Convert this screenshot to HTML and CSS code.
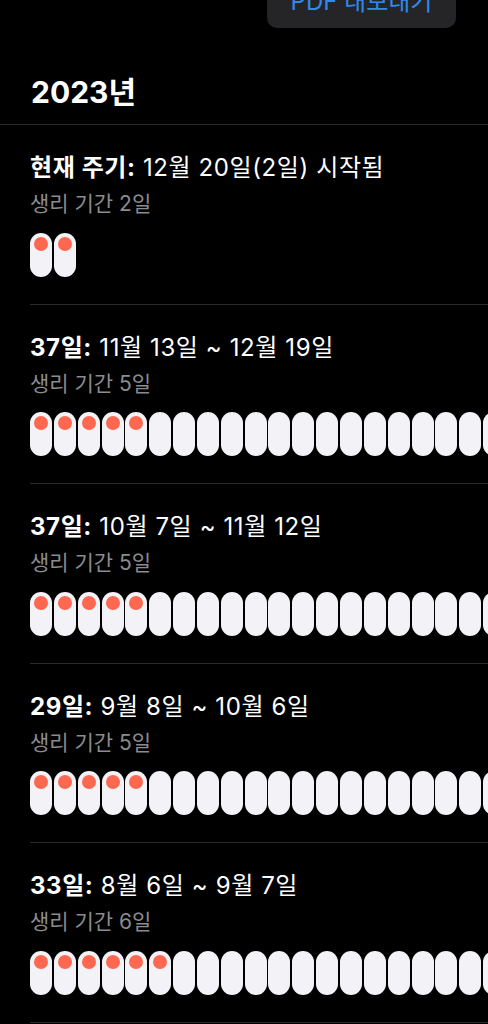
FILE: index.html
```html
<!DOCTYPE html>
<html>
<head>
    <meta charset="utf-8">
    <title>주기 기록</title>
    <link rel="stylesheet" href="styles.css">
</head>
<body>
    <!-- top bar: export button is scrolled half out of view -->
    <div class="topbar">
        <a class="export" href="#">PDF 내보내기</a>
    </div>

    <div class="year">2023년</div>

    <!-- one block per cycle -->
    <div class="cycle">
        <p class="cycle-title"><b>현재 주기:</b> 12월 20일(2일) 시작됨</p>
        <p class="cycle-sub">생리 기간 2일</p>
        <div class="days" data-days="2" data-period="2"></div>
    </div>

    <div class="cycle">
        <p class="cycle-title"><b>37일:</b> 11월 13일 ~ 12월 19일</p>
        <p class="cycle-sub">생리 기간 5일</p>
        <div class="days" data-days="37" data-period="5"></div>
    </div>

    <div class="cycle">
        <p class="cycle-title"><b>37일:</b> 10월 7일 ~ 11월 12일</p>
        <p class="cycle-sub">생리 기간 5일</p>
        <div class="days" data-days="37" data-period="5"></div>
    </div>

    <div class="cycle">
        <p class="cycle-title"><b>29일:</b> 9월 8일 ~ 10월 6일</p>
        <p class="cycle-sub">생리 기간 5일</p>
        <div class="days" data-days="29" data-period="5"></div>
    </div>

    <div class="cycle">
        <p class="cycle-title"><b>33일:</b> 8월 6일 ~ 9월 7일</p>
        <p class="cycle-sub">생리 기간 6일</p>
        <div class="days" data-days="33" data-period="6"></div>
    </div>

    <script>
    // fill each row with one pill per day, a red dot on period days
    var rows = document.querySelectorAll('.days');
    for (var i = 0; i < rows.length; i++) {
        var total = parseInt(rows[i].getAttribute('data-days'));
        var period = parseInt(rows[i].getAttribute('data-period'));
        for (var d = 0; d < total; d++) {
            var pill = document.createElement('div');
            pill.className = 'day';
            if (d < period) {
                var dot = document.createElement('div');
                dot.className = 'dot';
                pill.appendChild(dot);
            }
            rows[i].appendChild(pill);
        }
    }
    </script>
</body>
</html>
```

FILE: styles.css
```css
/* whole page: black, iOS-like type */
body {
    margin: 0;
    padding: 0;
    background: #000;
    color: #fff;
    font-family: Inter, "Noto Sans CJK KR", sans-serif;
    overflow-x: hidden;
}

p { margin: 0; }

/* top bar, only the lower part of the button shows */
.topbar {
    height: 28px;
    overflow: hidden;
    display: flex;
    justify-content: flex-end;
    align-items: flex-end;
    padding-right: 32px;
}

.export {
    display: block;
    width: 189px;
    height: 52px;
    line-height: 52px;
    text-align: center;
    background: #252527;
    border-radius: 10px;
    color: #3289ec;
    font-size: 24px;
    text-decoration: none;
}

/* year heading with a full-width rule under it */
.year {
    font-size: 30px;
    font-weight: 700;
    line-height: 34px;
    padding: 47px 0 15px 31px;
    border-bottom: 1px solid #2a2a2c;
}

/* a cycle block; its rule starts at the text edge */
.cycle {
    margin-left: 30px;
    padding: 29px 0 27px 0;
    border-bottom: 1px solid #2a2a2c;
}

.cycle-title {
    font-size: 24px;
    letter-spacing: 0.6px;
    line-height: 28px;
    white-space: nowrap;
}

.cycle-title b { font-weight: 700; }

.cycle-sub {
    font-size: 21px;
    line-height: 24px;
    color: #8b8b90;
    margin-top: 10px;
}

/* row of day pills, clipped by the screen edge */
.days {
    display: flex;
    gap: 1.85px;
    margin-top: 16.5px;
}

.day {
    flex: none;
    width: 22px;
    height: 44px;
    border-radius: 11px;
    background: #f2f2f7;
    padding-top: 4px;
    box-sizing: border-box;
}

.dot {
    width: 14px;
    height: 14px;
    border-radius: 50%;
    background: #fe6750;
    margin: 0 auto;
}
```
